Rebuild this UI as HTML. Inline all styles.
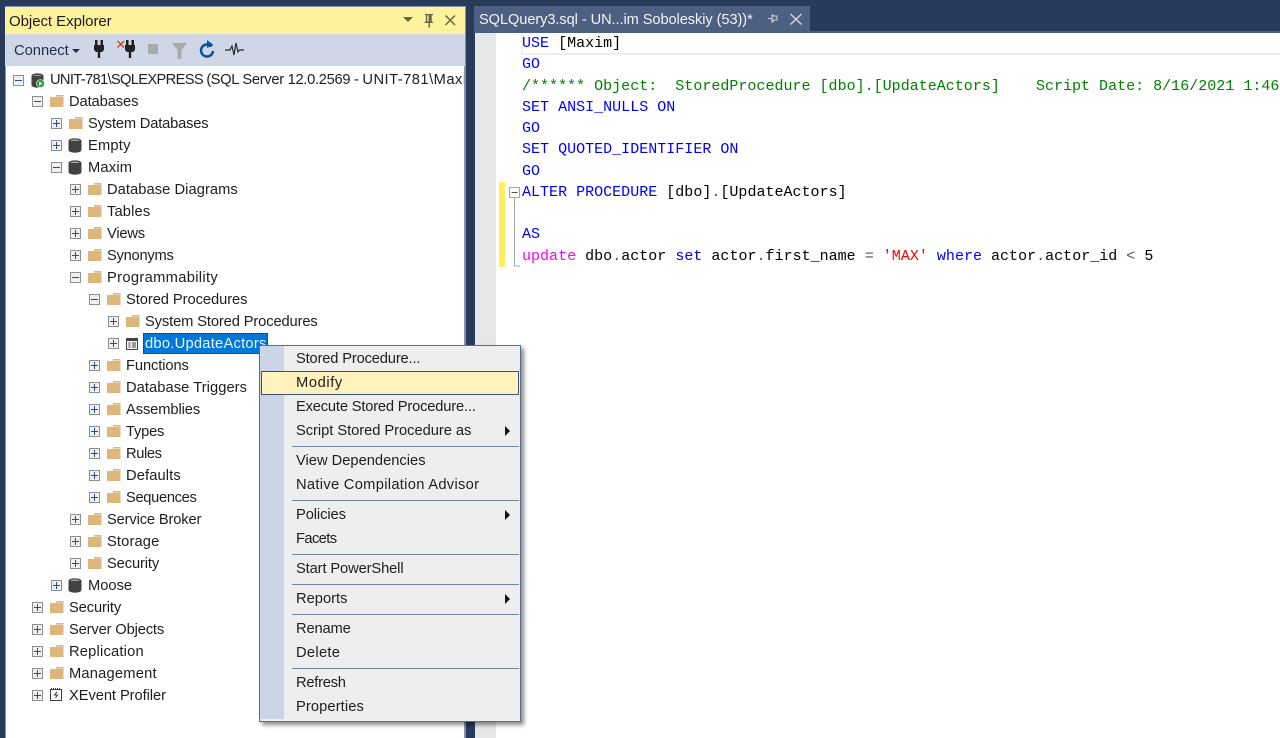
<!DOCTYPE html>
<html><head><meta charset="utf-8"><style>
html,body{margin:0;padding:0}
body{width:1280px;height:738px;overflow:hidden;background:#293b5b;position:relative;font-family:"Liberation Sans",sans-serif;font-size:14.7px;color:#1e1e1e}
div,svg{position:absolute}
.t{white-space:nowrap;height:22px;line-height:22px;margin-top:1px}
.c{font-family:"Liberation Mono",monospace;font-size:15px;letter-spacing:.015px;white-space:pre;left:522px;height:21px;line-height:21px;color:#000}
.k{color:#0000ff}.g{color:#008000}.m{color:#ff00ff}.r{color:#ff0000}.a{color:#555}
.sep{left:292px;width:227px;height:1px;background:#75839f}
</style></head><body>
<svg width="0" height="0" style="left:0;top:0"><defs>
<symbol id="f" viewBox="0 0 14 13"><path d="M0 2h6V0h7.500v12H0z" fill="#dcb67a"/><path d="M6.500 1h6.500v1H6.500z" fill="#ead2a8"/></symbol>
<symbol id="d" viewBox="0 0 14 15"><path d="M.5 3C.5-.5 13.500-.5 13.500 3v9c0 3.500-13 3.500-13 0z" fill="#424242"/><path d="M2 3C4 1.200 10 1.200 12 3 10 2.400 4 2.400 2 3z" fill="#f6f6f6"/></symbol>
<symbol id="p" viewBox="0 0 11 11"><rect x=".5" y=".5" width="10" height="10" fill="#f0f0f0" stroke="#8e8e8e"/><path d="M2 5.500h7M5.500 2v7" stroke="#2b4b8c"/></symbol>
<symbol id="n" viewBox="0 0 11 11"><rect x=".5" y=".5" width="10" height="10" fill="#f0f0f0" stroke="#8e8e8e"/><path d="M2 5.500h7" stroke="#2b4b8c"/></symbol>
<symbol id="plug" viewBox="0 0 10 18"><path d="M1 0h2.500v5H1zM6.500 0H9v5H6.500zM0 5h10v5l-2 2H6.200v6H3.800v-6H2L0 10z" fill="#212121"/></symbol>
</defs></svg>

<!-- Object Explorer frame -->
<div style="left:5px;top:6px;width:461px;height:732px;background:#8592b1"></div>
<div style="left:5px;top:7px;width:460px;height:27px;background:#fff29d"></div>
<div class="t" style="left:9px;top:10px;font-size:15px;color:#1a1a1a;letter-spacing:-.05px">Object Explorer</div>
<svg style="left:402px;top:13px" width="60" height="15" viewBox="0 0 60 15"><path d="M1 4h10L6 9z" fill="#6b6546"/><path d="M23 1h8v1.200h-1.300V8l1.800 2H28v4.500h-1.500V10h-4.500l1.800-2V2.200H23zM25.200 2.200V8.500h1.300V2.200z" fill="#6b6546"/><path d="M43.500 2.500l9.500 9.500M53 2.500l-9.500 9.500" stroke="#6b6546" stroke-width="1.500" fill="none"/></svg>
<div style="left:5px;top:34px;width:460px;height:32px;background:#cfd6e5"></div>
<div class="t" style="left:14px;top:39px;color:#1e2f4d">Connect</div>
<svg style="left:72px;top:49px" width="8" height="5"><path d="M0 0h8L4 4z" fill="#1e2f4d"/></svg>
<svg style="left:94px;top:40px" width="10" height="18"><use href="#plug" width="10" height="18"/></svg>
<svg style="left:117px;top:40px" width="20" height="18" viewBox="0 0 20 18"><path d="M.5 1l6.500 6.500M7 1L.5 7.500" stroke="#c8481f" stroke-width="1.400"/><use href="#plug" x="8" width="10" height="18"/></svg>
<div style="left:148px;top:44px;width:10px;height:10px;background:#a8a9ac"></div>
<svg style="left:172px;top:42px" width="16" height="17"><path d="M0 1h15L9.500 8v9h-4V8z" fill="#a8a9ac"/></svg>
<svg style="left:198px;top:40px" width="18" height="19" viewBox="0 0 18 19"><path d="M13.500 6.500A6 6 0 1 0 15 11" fill="none" stroke="#00539c" stroke-width="2.500"/><path d="M9 0l6.500 5L9 8z" fill="#00539c"/></svg>
<svg style="left:225px;top:42px" width="19" height="15" viewBox="0 0 19 15"><path d="M0 8h5l2-4 2 9 2-12 2 9 1.500-2H19" fill="none" stroke="#2b2b2b" stroke-width="1.200"/></svg>

<!-- Tree -->
<div style="left:6px;top:66px;width:458px;height:672px;background:#fff"></div>
<div style="left:6px;top:66px;width:458px;height:672px;overflow:hidden">
<svg style="left:7px;top:9px" width="11" height="11"><use href="#n" width="11" height="11"/></svg>
<svg style="left:25px;top:7px" width="20" height="16" viewBox="0 0 20 16"><path d="M.5 3C.5-.5 12.500-.5 12.500 3v9c0 3.500-12 3.500-12 0z" fill="#424242"/><path d="M2 3C4 1.500 9 1.500 11 3 9 2.400 4 2.400 2 3z" fill="#f2f2f2"/><circle cx="9.500" cy="10.500" r="4" fill="#2e9e3c" stroke="#fff" stroke-width=".6"/><path d="M8.200 8.500v4l3.300-2z" fill="#fff"/></svg>
<div class="t" style="left:44px;top:2px"><span style="letter-spacing:-.67px">UNIT-781\SQLEXPRESS (</span><span style="letter-spacing:-.3px">SQL Server 12.0.2569 - </span><span style="letter-spacing:.48px">UNIT-781\Maxim Soboleskiy)</span></div>
</div>

<svg style="left:0;top:0;width:1280px;height:738px" width="1280" height="738">
<use href="#n" x="32" y="96" width="11" height="11"/><use href="#f" x="50" y="95" width="14" height="13"/>
<use href="#p" x="51" y="118" width="11" height="11"/><use href="#f" x="69" y="117" width="14" height="13"/>
<use href="#p" x="51" y="140" width="11" height="11"/><use href="#d" x="68" y="138" width="14" height="15"/>
<use href="#n" x="51" y="162" width="11" height="11"/><use href="#d" x="68" y="160" width="14" height="15"/>
<use href="#p" x="70" y="184" width="11" height="11"/><use href="#f" x="88" y="183" width="14" height="13"/>
<use href="#p" x="70" y="206" width="11" height="11"/><use href="#f" x="88" y="205" width="14" height="13"/>
<use href="#p" x="70" y="228" width="11" height="11"/><use href="#f" x="88" y="227" width="14" height="13"/>
<use href="#p" x="70" y="250" width="11" height="11"/><use href="#f" x="88" y="249" width="14" height="13"/>
<use href="#n" x="70" y="272" width="11" height="11"/><use href="#f" x="88" y="271" width="14" height="13"/>
<use href="#n" x="89" y="294" width="11" height="11"/><use href="#f" x="107" y="293" width="14" height="13"/>
<use href="#p" x="108" y="316" width="11" height="11"/><use href="#f" x="126" y="315" width="14" height="13"/>
<use href="#p" x="108" y="338" width="11" height="11"/>
<rect x="126.500" y="338.500" width="11" height="11" fill="#f4f4f4" stroke="#424242"/><path d="M127 340h10" stroke="#424242" stroke-width="2"/><path d="M128.500 343h2M132 343h4M128.500 345h2M132 345h4M128.500 347h2M132 347h4" stroke="#424242"/>
<use href="#p" x="89" y="360" width="11" height="11"/><use href="#f" x="107" y="359" width="14" height="13"/>
<use href="#p" x="89" y="382" width="11" height="11"/><use href="#f" x="107" y="381" width="14" height="13"/>
<use href="#p" x="89" y="404" width="11" height="11"/><use href="#f" x="107" y="403" width="14" height="13"/>
<use href="#p" x="89" y="426" width="11" height="11"/><use href="#f" x="107" y="425" width="14" height="13"/>
<use href="#p" x="89" y="448" width="11" height="11"/><use href="#f" x="107" y="447" width="14" height="13"/>
<use href="#p" x="89" y="470" width="11" height="11"/><use href="#f" x="107" y="469" width="14" height="13"/>
<use href="#p" x="89" y="492" width="11" height="11"/><use href="#f" x="107" y="491" width="14" height="13"/>
<use href="#p" x="70" y="514" width="11" height="11"/><use href="#f" x="88" y="513" width="14" height="13"/>
<use href="#p" x="70" y="536" width="11" height="11"/><use href="#f" x="88" y="535" width="14" height="13"/>
<use href="#p" x="70" y="558" width="11" height="11"/><use href="#f" x="88" y="557" width="14" height="13"/>
<use href="#p" x="51" y="580" width="11" height="11"/><use href="#d" x="68" y="578" width="14" height="15"/>
<use href="#p" x="32" y="602" width="11" height="11"/><use href="#f" x="50" y="601" width="14" height="13"/>
<use href="#p" x="32" y="624" width="11" height="11"/><use href="#f" x="50" y="623" width="14" height="13"/>
<use href="#p" x="32" y="646" width="11" height="11"/><use href="#f" x="50" y="645" width="14" height="13"/>
<use href="#p" x="32" y="668" width="11" height="11"/><use href="#f" x="50" y="667" width="14" height="13"/>
<use href="#p" x="32" y="690" width="11" height="11"/>
<rect x="50.500" y="689.500" width="11" height="11" fill="#f6f6f6" stroke="#424242"/><path d="M51 688.500h10" stroke="#424242" stroke-dasharray="1 1"/><path d="M57 692l-2.500 3h3l-2 3" stroke="#424242" fill="none"/>
</svg>

<div class="t" style="left:69px;top:90px;letter-spacing:-.1px">Databases</div>
<div class="t" style="left:88px;top:112px;letter-spacing:-.18px">System Databases</div>
<div class="t" style="left:88px;top:134px;letter-spacing:.2px">Empty</div>
<div class="t" style="left:88px;top:156px;letter-spacing:.2px">Maxim</div>
<div class="t" style="left:107px;top:178px;letter-spacing:.06px">Database Diagrams</div>
<div class="t" style="left:107px;top:200px;letter-spacing:.15px">Tables</div>
<div class="t" style="left:107px;top:222px;letter-spacing:-.2px">Views</div>
<div class="t" style="left:107px;top:244px;letter-spacing:-.25px">Synonyms</div>
<div class="t" style="left:107px;top:266px;letter-spacing:.33px">Programmability</div>
<div class="t" style="left:126px;top:288px;letter-spacing:-.06px">Stored Procedures</div>
<div class="t" style="left:145px;top:310px;letter-spacing:-.12px">System Stored Procedures</div>
<div style="left:143px;top:333px;width:125px;height:21px;background:#0078d7;outline:1px dotted #3a2a10;outline-offset:-1px"></div>
<div class="t" style="left:145px;top:332px;color:#e8f3fc;letter-spacing:.25px">dbo.UpdateActors</div>
<div class="t" style="left:126px;top:354px;letter-spacing:-.1px">Functions</div>
<div class="t" style="left:126px;top:376px;letter-spacing:.06px">Database Triggers</div>
<div class="t" style="left:126px;top:398px;letter-spacing:-.1px">Assemblies</div>
<div class="t" style="left:126px;top:420px;letter-spacing:-.2px">Types</div>
<div class="t" style="left:126px;top:442px;letter-spacing:-.4px">Rules</div>
<div class="t" style="left:126px;top:464px;letter-spacing:.12px">Defaults</div>
<div class="t" style="left:126px;top:486px;letter-spacing:-.33px">Sequences</div>
<div class="t" style="left:107px;top:508px;letter-spacing:-.15px">Service Broker</div>
<div class="t" style="left:107px;top:530px;letter-spacing:.14px">Storage</div>
<div class="t" style="left:107px;top:552px;letter-spacing:-.12px">Security</div>
<div class="t" style="left:88px;top:574px">Moose</div>
<div class="t" style="left:69px;top:596px;letter-spacing:-.12px">Security</div>
<div class="t" style="left:69px;top:618px;letter-spacing:-.15px">Server Objects</div>
<div class="t" style="left:69px;top:640px;letter-spacing:.2px">Replication</div>
<div class="t" style="left:69px;top:662px;letter-spacing:.2px">Management</div>
<div class="t" style="left:69px;top:684px;letter-spacing:-.07px">XEvent Profiler</div>

<!-- Tab -->
<div style="left:474px;top:6px;width:336px;height:25px;background:#4d6082"></div>
<div class="t" style="left:479px;top:8px;color:#f1f3f7;font-size:14.6px;letter-spacing:-.07px">SQLQuery3.sql - UN...im Soboleskiy (53))*</div>
<svg style="left:766px;top:12px" width="40" height="14" viewBox="0 0 40 14"><path d="M2 6.500h4M6 3v7h1V8h4V4H7V3z" fill="none" stroke="#ced4df"/><path d="M24.500 2l11 10.500M35.500 2l-11 10.500" stroke="#ced4df" stroke-width="1.500"/></svg>
<div style="left:474px;top:31px;width:806px;height:2px;background:#4d6082"></div>

<!-- Editor -->
<div style="left:475px;top:33px;width:805px;height:705px;background:#fff"></div>
<div style="left:475px;top:33px;width:21px;height:705px;background:#e6e7e8"></div>
<div style="left:521px;top:33px;width:759px;height:20px;border-left:2px solid #eeeeee;border-bottom:2px solid #eeeeee"></div>
<div style="left:499px;top:182px;width:6px;height:85px;background:#ffee62"></div>
<svg style="left:508px;top:185px" width="14" height="84" viewBox="0 0 14 84"><rect x="1.500" y="2.500" width="10" height="10" fill="#fff" stroke="#a5a5a5"/><path d="M3.500 7.500h6" stroke="#555"/><path d="M6.500 13v68H12" fill="none" stroke="#a5a5a5"/></svg>
<div class="c" style="top:33px"><span class="k">USE</span> [Maxim]</div>
<div class="c k" style="top:54px">GO</div>
<div class="c g" style="top:76px">/****** Object:  StoredProcedure [dbo].[UpdateActors]    Script Date: 8/16/2021 1:46</div>
<div class="c k" style="top:97px">SET ANSI_NULLS ON</div>
<div class="c k" style="top:118px">GO</div>
<div class="c k" style="top:139px">SET QUOTED_IDENTIFIER ON</div>
<div class="c k" style="top:161px">GO</div>
<div class="c" style="top:182px"><span class="k">ALTER PROCEDURE</span> [dbo]<span class="a">.</span>[UpdateActors]</div>
<div class="c k" style="top:224px">AS</div>
<div class="c" style="top:246px"><span class="m">update</span> dbo<span class="a">.</span>actor <span class="k">set</span> actor<span class="a">.</span>first_name <span class="a">=</span> <span class="r">'MAX'</span> <span class="k">where</span> actor<span class="a">.</span>actor_id <span class="a">&lt;</span> 5</div>

<!-- Context menu -->
<div style="left:259px;top:345px;width:260px;height:375px;background:#eeeeef;border:1px solid #5c6c8c;box-shadow:3px 3px 4px rgba(0,0,0,.45)"></div>
<div style="left:260px;top:346px;width:24px;height:373px;background:#ccd5e5"></div>
<div style="left:261px;top:371px;width:256px;height:22px;background:#fff2bd;border:1px solid #3d5278"></div>
<div class="t" style="left:296px;top:347px;letter-spacing:-.16px">Stored Procedure...</div>
<div class="t" style="left:296px;top:371px;letter-spacing:.6px">Modify</div>
<div class="t" style="left:296px;top:395px;letter-spacing:-.18px">Execute Stored Procedure...</div>
<div class="t" style="left:296px;top:419px;letter-spacing:-.04px">Script Stored Procedure as</div>
<div class="sep" style="top:446px"></div>
<div class="t" style="left:296px;top:449px">View Dependencies</div>
<div class="t" style="left:296px;top:473px;letter-spacing:.3px">Native Compilation Advisor</div>
<div class="sep" style="top:500px"></div>
<div class="t" style="left:296px;top:503px;letter-spacing:-.1px">Policies</div>
<div class="t" style="left:296px;top:527px;letter-spacing:-.6px">Facets</div>
<div class="sep" style="top:554px"></div>
<div class="t" style="left:296px;top:557px;letter-spacing:-.12px">Start PowerShell</div>
<div class="sep" style="top:584px"></div>
<div class="t" style="left:296px;top:587px">Reports</div>
<div class="sep" style="top:614px"></div>
<div class="t" style="left:296px;top:617px;letter-spacing:-.15px">Rename</div>
<div class="t" style="left:296px;top:641px;letter-spacing:.3px">Delete</div>
<div class="sep" style="top:668px"></div>
<div class="t" style="left:296px;top:671px;letter-spacing:-.25px">Refresh</div>
<div class="t" style="left:296px;top:695px;letter-spacing:.1px">Properties</div>
<svg style="left:505px;top:426px" width="6" height="10"><path d="M0 0l5 5-5 5z" fill="#111"/></svg>
<svg style="left:505px;top:510px" width="6" height="10"><path d="M0 0l5 5-5 5z" fill="#111"/></svg>
<svg style="left:505px;top:594px" width="6" height="10"><path d="M0 0l5 5-5 5z" fill="#111"/></svg>
</body></html>
